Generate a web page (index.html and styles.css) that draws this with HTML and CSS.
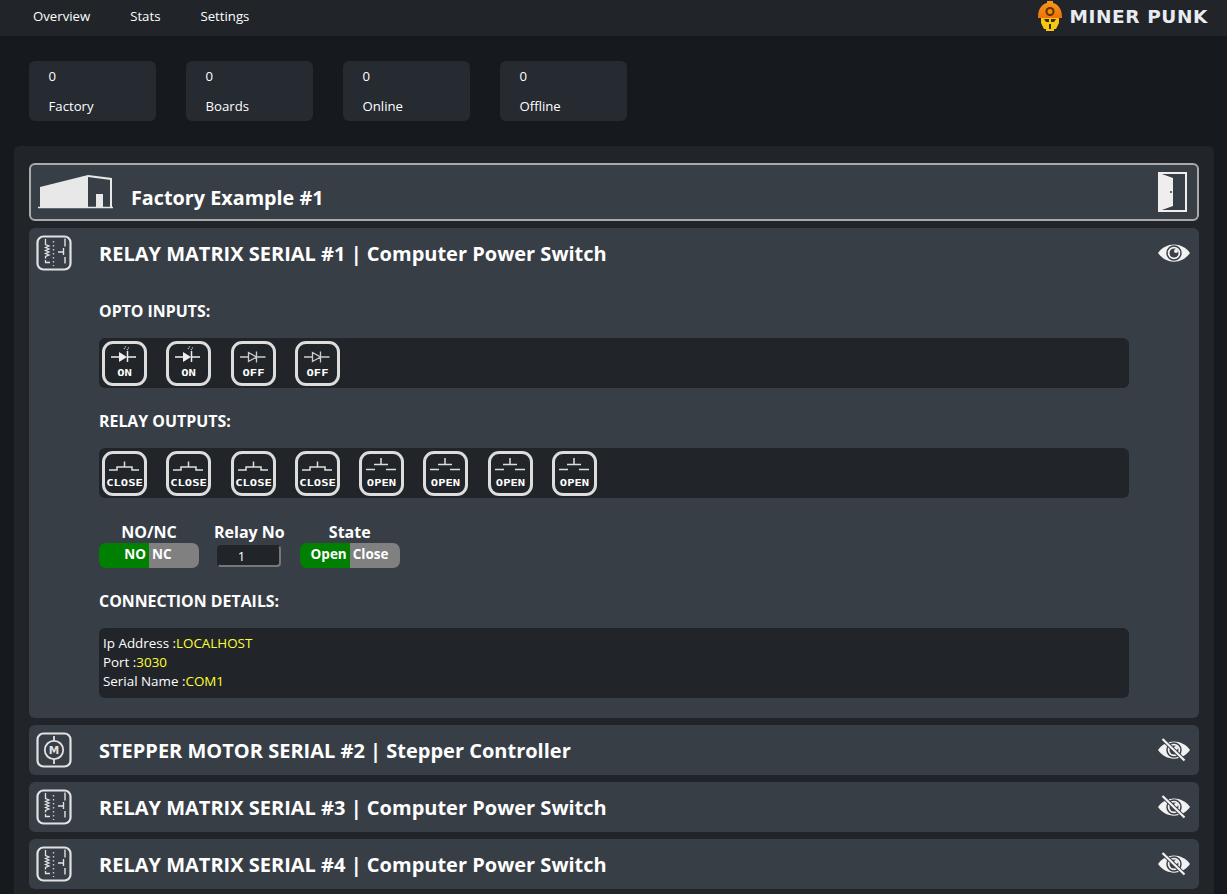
FILE: index.html
```html
<!DOCTYPE html>
<html>
<head>
  <title>Miner Punk</title>
  <link rel="stylesheet" href="styles.css">
</head>
<body>

<svg class="sprite" width="0" height="0">
  <symbol id="ic-relay" viewBox="0 0 37 37">
    <rect x="1.500" y="1.500" width="33" height="33" rx="6" fill="none" stroke="#e2e2e2" stroke-width="2.200"/>
    <path d="M9.500 4v5.500l3.500 1.500l-3.500 1.500l3.500 1.500l-3.500 1.500l3.500 1.500l-3.500 1.500l3.500 1.500l-3.500 1.500v2M14 27.500H9.500v-2.500" fill="none" stroke="#e2e2e2" stroke-width="1.300"/>
    <path d="M17.500 6v25" fill="none" stroke="#ccc" stroke-width="1.400" stroke-dasharray="1.500 2.500"/>
    <path d="M29 3.500v8M22 17h5.500M27.500 13v7M29 22v6.500" fill="none" stroke="#e2e2e2" stroke-width="1.400"/>
  </symbol>
  <symbol id="ic-motor" viewBox="0 0 37 37">
    <rect x="1.500" y="1.500" width="33" height="33" rx="6" fill="none" stroke="#e2e2e2" stroke-width="2.200"/>
    <circle cx="18" cy="18" r="9.200" fill="none" stroke="#e2e2e2" stroke-width="1.800"/>
    <path d="M18 4v5M18 27v5" fill="none" stroke="#e2e2e2" stroke-width="1.800"/>
    <text x="18" y="22" text-anchor="middle" class="motor-m">M</text>
  </symbol>
  <symbol id="ic-eye" viewBox="0 0 34 24">
    <path d="M1 12C9 .5 25 .5 33 12C25 23.500 9 23.500 1 12Z" fill="#f2f2f2"/>
    <circle cx="17" cy="12" r="7" fill="none" stroke="#3a4048" stroke-width="1.500"/>
    <circle cx="17" cy="12" r="4.500" fill="#3a4048"/>
    <circle cx="19" cy="10" r="2" fill="#f2f2f2"/>
  </symbol>
  <symbol id="ic-eye-off" viewBox="0 0 34 24">
    <use href="#ic-eye"/>
    <path d="M5.500 1L27.500 22.500" stroke="#3a4048" stroke-width="4"/>
    <path d="M5.500 1L27.500 22.500" stroke="#f2f2f2" stroke-width="2.200"/>
  </symbol>
  <symbol id="ic-led-on" viewBox="0 0 45 45">
    <path d="M9 16h9M25 16h9M25.500 10v11" fill="none" stroke="#eee" stroke-width="1.500"/>
    <path d="M17 11l8 5l-8 5Z" fill="#eee"/>
    <path d="M22 8l2 -3M25 9l2 -3" stroke="#ddd" stroke-width="1.200" stroke-dasharray="1 1"/>
  </symbol>
  <symbol id="ic-led-off" viewBox="0 0 45 45">
    <path d="M9 16h9M25.500 16h9M25.500 10.500v11M17.500 11.500l8 4.500l-8 4.500Z" fill="none" stroke="#ccc" stroke-width="1.300"/>
  </symbol>
  <symbol id="ic-sw-close" viewBox="0 0 45 45">
    <path d="M7 19h8v-3h15v3h7M22.500 10.500v5.500" fill="none" stroke="#ddd" stroke-width="1.500"/>
  </symbol>
  <symbol id="ic-sw-open" viewBox="0 0 45 45">
    <path d="M7 18.500h9M27 18.500h10M15 13.500h14M22 7v6.500" fill="none" stroke="#ddd" stroke-width="1.500"/>
  </symbol>
</svg>

<nav class="topbar">
  <ul class="nav-links">
    <li>Overview</li>
    <li>Stats</li>
    <li>Settings</li>
  </ul>
  <div class="logo">
    <svg class="logo-mark" viewBox="0 0 24 30" width="24" height="30">
      <defs>
        <linearGradient id="helmet" x1="0" y1="0" x2="0" y2="1">
          <stop offset="0" stop-color="#f79a1e"/>
          <stop offset="1" stop-color="#f06f0a"/>
        </linearGradient>
      </defs>
      <path d="M3 16h18v6l-3 6h-2v2H8v-2H6l-3-6Z" fill="#f6c70f"/>
      <path d="M6 18h5v3H8ZM13 18h5l-2 3h-3ZM11 23h2v5h-2Z" fill="#3a2a08"/>
      <path d="M0 16C0 8 4 3 9 2V0h6v2c5 1 9 6 9 14v1H0Z" fill="url(#helmet)"/>
      <circle cx="12" cy="10.500" r="4.500" fill="#5e3305"/>
      <circle cx="12" cy="10.500" r="2.500" fill="#f58a0b"/>
    </svg>
    <span class="logo-text">MINER PUNK</span>
  </div>
</nav>

<section class="stats">
  <div class="stat-card"><span>0</span><span>Factory</span></div>
  <div class="stat-card"><span>0</span><span>Boards</span></div>
  <div class="stat-card"><span>0</span><span>Online</span></div>
  <div class="stat-card"><span>0</span><span>Offline</span></div>
</section>

<main class="panel">
  <header class="factory-bar">
    <svg class="factory-icon" viewBox="0 0 76 35" width="76" height="35">
      <path d="M2 13L50 1V33H2Z" fill="#e8e8e8"/>
      <path d="M50 2L73 5V33" fill="none" stroke="#e8e8e8" stroke-width="2"/>
      <rect x="58" y="20" width="7" height="13" fill="#e8e8e8"/>
      <path d="M0 33.500H75" stroke="#e8e8e8" stroke-width="1.500"/>
    </svg>
    <h1 class="factory-title">Factory Example #1</h1>
    <svg class="door-icon" viewBox="0 0 30 40" width="30" height="40">
      <rect x="1" y="1" width="27" height="38" fill="none" stroke="#eee" stroke-width="2"/>
      <path d="M1 1L15 6V34L1 39Z" fill="#eee"/>
      <circle cx="13" cy="20" r="1" fill="#333"/>
    </svg>
  </header>

  <article class="board">
    <div class="board-head">
      <svg class="board-icon"><use href="#ic-relay"/></svg>
      <h2 class="board-title">RELAY MATRIX SERIAL #1 | Computer Power Switch</h2>
      <svg class="eye-icon"><use href="#ic-eye"/></svg>
    </div>
    <div class="board-body">
      <h3 class="section-title">OPTO INPUTS:</h3>
      <div class="io-strip">
        <div class="io-btn"><svg><use href="#ic-led-on"/></svg><span>ON</span></div>
        <div class="io-btn"><svg><use href="#ic-led-on"/></svg><span>ON</span></div>
        <div class="io-btn"><svg><use href="#ic-led-off"/></svg><span>OFF</span></div>
        <div class="io-btn"><svg><use href="#ic-led-off"/></svg><span>OFF</span></div>
      </div>

      <h3 class="section-title">RELAY OUTPUTS:</h3>
      <div class="io-strip relay-strip">
        <div class="io-btn"><svg><use href="#ic-sw-close"/></svg><span>CLOSE</span></div>
        <div class="io-btn"><svg><use href="#ic-sw-close"/></svg><span>CLOSE</span></div>
        <div class="io-btn"><svg><use href="#ic-sw-close"/></svg><span>CLOSE</span></div>
        <div class="io-btn"><svg><use href="#ic-sw-close"/></svg><span>CLOSE</span></div>
        <div class="io-btn"><svg><use href="#ic-sw-open"/></svg><span>OPEN</span></div>
        <div class="io-btn"><svg><use href="#ic-sw-open"/></svg><span>OPEN</span></div>
        <div class="io-btn"><svg><use href="#ic-sw-open"/></svg><span>OPEN</span></div>
        <div class="io-btn"><svg><use href="#ic-sw-open"/></svg><span>OPEN</span></div>
      </div>

      <div class="controls">
        <div class="control">
          <label>NO/NC</label>
          <div class="toggle"><span class="toggle-on">NO</span><span class="toggle-off">NC</span></div>
        </div>
        <div class="control">
          <label>Relay No</label>
          <input class="relay-input" type="text" value="1">
        </div>
        <div class="control">
          <label>State</label>
          <div class="toggle"><span class="toggle-on">Open</span><span class="toggle-off">Close</span></div>
        </div>
      </div>

      <h3 class="section-title">CONNECTION DETAILS:</h3>
      <div class="details">
        <div>Ip Address :<span class="value">LOCALHOST</span></div>
        <div>Port :<span class="value">3030</span></div>
        <div>Serial Name :<span class="value">COM1</span></div>
      </div>
    </div>
  </article>

  <article class="board">
    <div class="board-head">
      <svg class="board-icon"><use href="#ic-motor"/></svg>
      <h2 class="board-title">STEPPER MOTOR SERIAL #2 | Stepper Controller</h2>
      <svg class="eye-icon"><use href="#ic-eye-off"/></svg>
    </div>
  </article>
  <article class="board">
    <div class="board-head">
      <svg class="board-icon"><use href="#ic-relay"/></svg>
      <h2 class="board-title">RELAY MATRIX SERIAL #3 | Computer Power Switch</h2>
      <svg class="eye-icon"><use href="#ic-eye-off"/></svg>
    </div>
  </article>
  <article class="board">
    <div class="board-head">
      <svg class="board-icon"><use href="#ic-relay"/></svg>
      <h2 class="board-title">RELAY MATRIX SERIAL #4 | Computer Power Switch</h2>
      <svg class="eye-icon"><use href="#ic-eye-off"/></svg>
    </div>
  </article>
</main>

</body>
</html>
```

FILE: styles.css
```css
html, body {
  height: 100%;
  overflow: hidden;
}

body {
  margin: 0;
  background: #16191d;
  color: #fff;
  font-family: "Open Sans", "Noto Sans", sans-serif;
  font-size: 14px;
}

.sprite {
  display: none;
}

.topbar {
  height: 36px;
  background: #212529;
  display: flex;
  align-items: center;
  justify-content: space-between;
  padding: 0 19px 0 33px;
}

.nav-links {
  display: flex;
  gap: 40px;
  margin: 0 0 4px;
  padding: 0;
  list-style: none;
  font-size: 13.200px;
}

.logo {
  display: flex;
  align-items: center;
  gap: 8px;
  margin-bottom: 5px;
}

.logo-text {
  margin-top: 2px;
  font-family: "DejaVu Sans", sans-serif;
  font-weight: bold;
  font-size: 18.500px;
  letter-spacing: 0.600px;
  color: #e8ecf0;
}

.stats {
  display: flex;
  gap: 30px;
  padding: 25px 29px;
}

.stat-card {
  width: 127px;
  height: 60px;
  box-sizing: border-box;
  padding: 6px 19.500px;
  background: #262a31;
  border-radius: 6px;
  display: flex;
  flex-direction: column;
  gap: 11px;
  font-size: 13.200px;
  line-height: 19px;
}

.panel {
  margin: 0 13px 0 14px;
  padding: 17px 15px 0;
  height: 760px;
  background: #212529;
  border-radius: 6px;
}

.factory-bar {
  height: 58px;
  box-sizing: border-box;
  display: flex;
  align-items: center;
  background: #383e46;
  border: 2px solid #aaa;
  border-radius: 6px;
  padding: 0 9px 0 7px;
  margin-bottom: 7px;
}

.factory-icon {
  margin-bottom: 2px;
}

.factory-title {
  margin: 10px 0 0 17px;
  flex: 1;
  font-size: 19.800px;
  font-weight: 700;
}

.board {
  background: #383e46;
  border-radius: 6px;
  margin-bottom: 7px;
}

.board-head {
  height: 50px;
  display: flex;
  align-items: center;
  padding: 0 8px 0 7px;
}

.board-icon {
  width: 37px;
  height: 37px;
  flex: none;
}

.board-title {
  flex: 1;
  margin: 0 0 0 26px;
  font-size: 20px;
  font-weight: 700;
}

.eye-icon {
  width: 34px;
  height: 24px;
  flex: none;
}

.board-body {
  padding: 23px 70px 20px;
}

.section-title {
  margin: 0 0 17px;
  font-size: 15.900px;
  font-weight: 700;
  line-height: 20px;
}

.io-strip {
  display: flex;
  gap: 19.250px;
  padding: 2.500px 3px;
  margin-bottom: 23px;
  background: #212529;
  border-radius: 6px;
}

.relay-strip {
  margin-bottom: 24px;
}

.io-btn {
  width: 45px;
  height: 45px;
  box-sizing: border-box;
  border: 3px solid #ddd;
  border-radius: 11px;
  position: relative;
}

.io-btn svg {
  position: absolute;
  left: -3px;
  top: -3px;
  width: 45px;
  height: 45px;
}

.io-btn span {
  position: absolute;
  left: -3px;
  right: -3px;
  bottom: 5px;
  text-align: center;
  font-family: "DejaVu Sans Mono", monospace;
  font-size: 9px;
  font-weight: bold;
  line-height: 10px;
  transform: scaleX(1.350);
}

.controls {
  display: flex;
  gap: 15px;
  margin-bottom: 23px;
}

.control {
  display: flex;
  flex-direction: column;
  align-items: center;
}

.control label {
  font-size: 16px;
  font-weight: 700;
  line-height: 21px;
}

.toggle {
  display: flex;
  width: 100px;
  height: 25px;
  border-radius: 7px;
  overflow: hidden;
  font-size: 13.500px;
  font-weight: 700;
  line-height: 23px;
}

.toggle span {
  width: 50px;
  box-sizing: border-box;
  padding: 0 3px;
}

.toggle-on {
  background: #008000;
  text-align: right;
}

.toggle-off {
  background: #808080;
  text-align: left;
}

.relay-input {
  width: 64px;
  height: 22px;
  box-sizing: border-box;
  margin-top: 2px;
  padding: 0 16px 0 0;
  background: #212529;
  border: 2px solid #212529;
  border-right-color: #777;
  border-bottom-color: #777;
  border-radius: 4px;
  color: #fff;
  font-family: inherit;
  font-size: 13px;
  text-align: center;
}

.details {
  height: 70px;
  box-sizing: border-box;
  padding: 6px 4px;
  background: #212529;
  border-radius: 6px;
  font-size: 13.400px;
  line-height: 19px;
}

.value {
  color: #ffff33;
}

.motor-m {
  fill: #e2e2e2;
  font-family: "DejaVu Sans", sans-serif;
  font-size: 10.500px;
  font-weight: bold;
}
```
